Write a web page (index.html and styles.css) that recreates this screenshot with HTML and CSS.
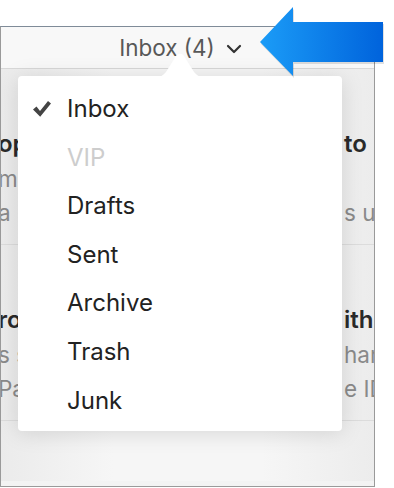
FILE: index.html
```html
<!DOCTYPE html>
<html>
<head>
<meta charset="utf-8">
<link rel="stylesheet" href="styles.css">
</head>
<body>
<div class="page">
  <div class="frame">
    <div class="header">
      <span class="title">Inbox (4)</span>
      <svg class="chev" width="16" height="10" viewBox="0 0 16 10"><path d="M2 2 L8 8 L14 2" fill="none" stroke="#333" stroke-width="2.2" stroke-linecap="round" stroke-linejoin="round"/></svg>
    </div>
    <div class="list">
      <div class="row">
        <div class="line bold"><span class="l">op</span><span class="r">to</span></div>
        <div class="line"><span class="l">mi</span><span class="r"></span></div>
        <div class="line"><span class="l">a</span><span class="r">s u</span></div>
      </div>
      <div class="row">
        <div class="line bold"><span class="l">ro</span><span class="r">ith</span></div>
        <div class="line"><span class="l">s s</span><span class="r">har</span></div>
        <div class="line"><span class="l">Pa</span><span class="r">e ID</span></div>
      </div>
      <div class="rest"></div>
    </div>
  </div>

  <div class="menu">
    <svg class="notch" width="60" height="26" viewBox="0 0 60 26"><path d="M0 26 C10 26 12 24 16 20 L26 4 C28 1 32 1 34 4 L44 20 C48 24 50 26 60 26 Z" fill="#fff"/></svg>
    <ul class="items">
      <li class="item"><svg class="check" width="20" height="18" viewBox="0 0 20 18"><path d="M1 9.5 L4.5 6.5 L8 11 L16 1 L19 3.5 L8.2 16.8 Z" fill="#444"/></svg>Inbox</li>
      <li class="item dim">VIP</li>
      <li class="item">Drafts</li>
      <li class="item">Sent</li>
      <li class="item">Archive</li>
      <li class="item">Trash</li>
      <li class="item">Junk</li>
    </ul>
  </div>

  <svg class="arrow" width="130" height="76" viewBox="0 0 130 76">
    <defs>
      <linearGradient id="ag" x1="0" y1="0" x2="1" y2="0">
        <stop offset="0" stop-color="#1b9cf7"/>
        <stop offset="1" stop-color="#0063dc"/>
      </linearGradient>
    </defs>
    <polygon points="2,36 35,1 35,16 125,16 125,56 35,56 35,70" fill="#000" opacity="0.12" transform="translate(1,2)"/>
    <polygon points="2,36 35,1 35,16 125,16 125,56 35,56 35,70" fill="url(#ag)"/>
  </svg>
</div>
</body>
</html>
```
FILE: styles.css
```css
html, body {
  margin: 0;
  padding: 0;
  background: #fff;
}
body {
  font-family: Inter, "Noto Sans", sans-serif;
}
.page {
  position: relative;
  width: 394px;
  height: 488px;
  overflow: hidden;
  padding-top: 26px;
  box-sizing: border-box;
}
.frame {
  width: 373px;
  height: 459px;
  border: 1px solid #9a9a9a;
  border-top-color: #7f8b98;
  overflow: hidden;
  background: #f3f3f3;
}
.header {
  height: 42px;
  background: #f8f8f8;
  border-bottom: 1px solid #d8d8d8;
  display: flex;
  align-items: center;
  justify-content: center;
  gap: 11px;
  padding-right: 14px;
  box-sizing: border-box;
}
.title {
  font-size: 22.5px;
  color: #585858;
  line-height: 1;
  margin-top: 2px;
}
.chev {
  display: block;
  margin-top: 2px;
}
.list {
  background: linear-gradient(to right, #ebebeb, #f6f6f6 30%, #f6f6f6 70%, #ececec);
}
.row {
  height: 176px;
  border-bottom: 1px solid #dcdcdc;
  padding-top: 58px;
  box-sizing: border-box;
}
.line {
  display: flex;
  height: 34.5px;
  line-height: 34.5px;
  font-size: 22.5px;
  color: #8a8a8a;
  white-space: nowrap;
}
.line.bold {
  font-weight: 600;
  color: #2a2a2a;
  font-size: 24px;
}
.l {
  width: 346px;
  margin-left: -3px;
  flex: none;
}
.r {
  flex: none;
}
.rest {
  height: 60px;
}
.menu {
  position: absolute;
  left: 18px;
  top: 76px;
  width: 324px;
  height: 355px;
  background: #fff;
  border-radius: 4px;
  box-shadow: 0 2px 22px rgba(0, 0, 0, 0.13);
}
.notch {
  position: absolute;
  left: 132px;
  top: -24px;
  display: block;
}
.items {
  list-style: none;
  margin: 0;
  padding: 9px 0 0 0;
}
.item {
  position: relative;
  height: 48.6px;
  line-height: 48.6px;
  font-size: 24px;
  color: #222;
  padding-left: 49px;
}
.item.dim {
  color: #cdcdcd;
}
.check {
  position: absolute;
  left: 14px;
  top: 15px;
}
.arrow {
  position: absolute;
  left: 258px;
  top: 6px;
  display: block;
}
```
